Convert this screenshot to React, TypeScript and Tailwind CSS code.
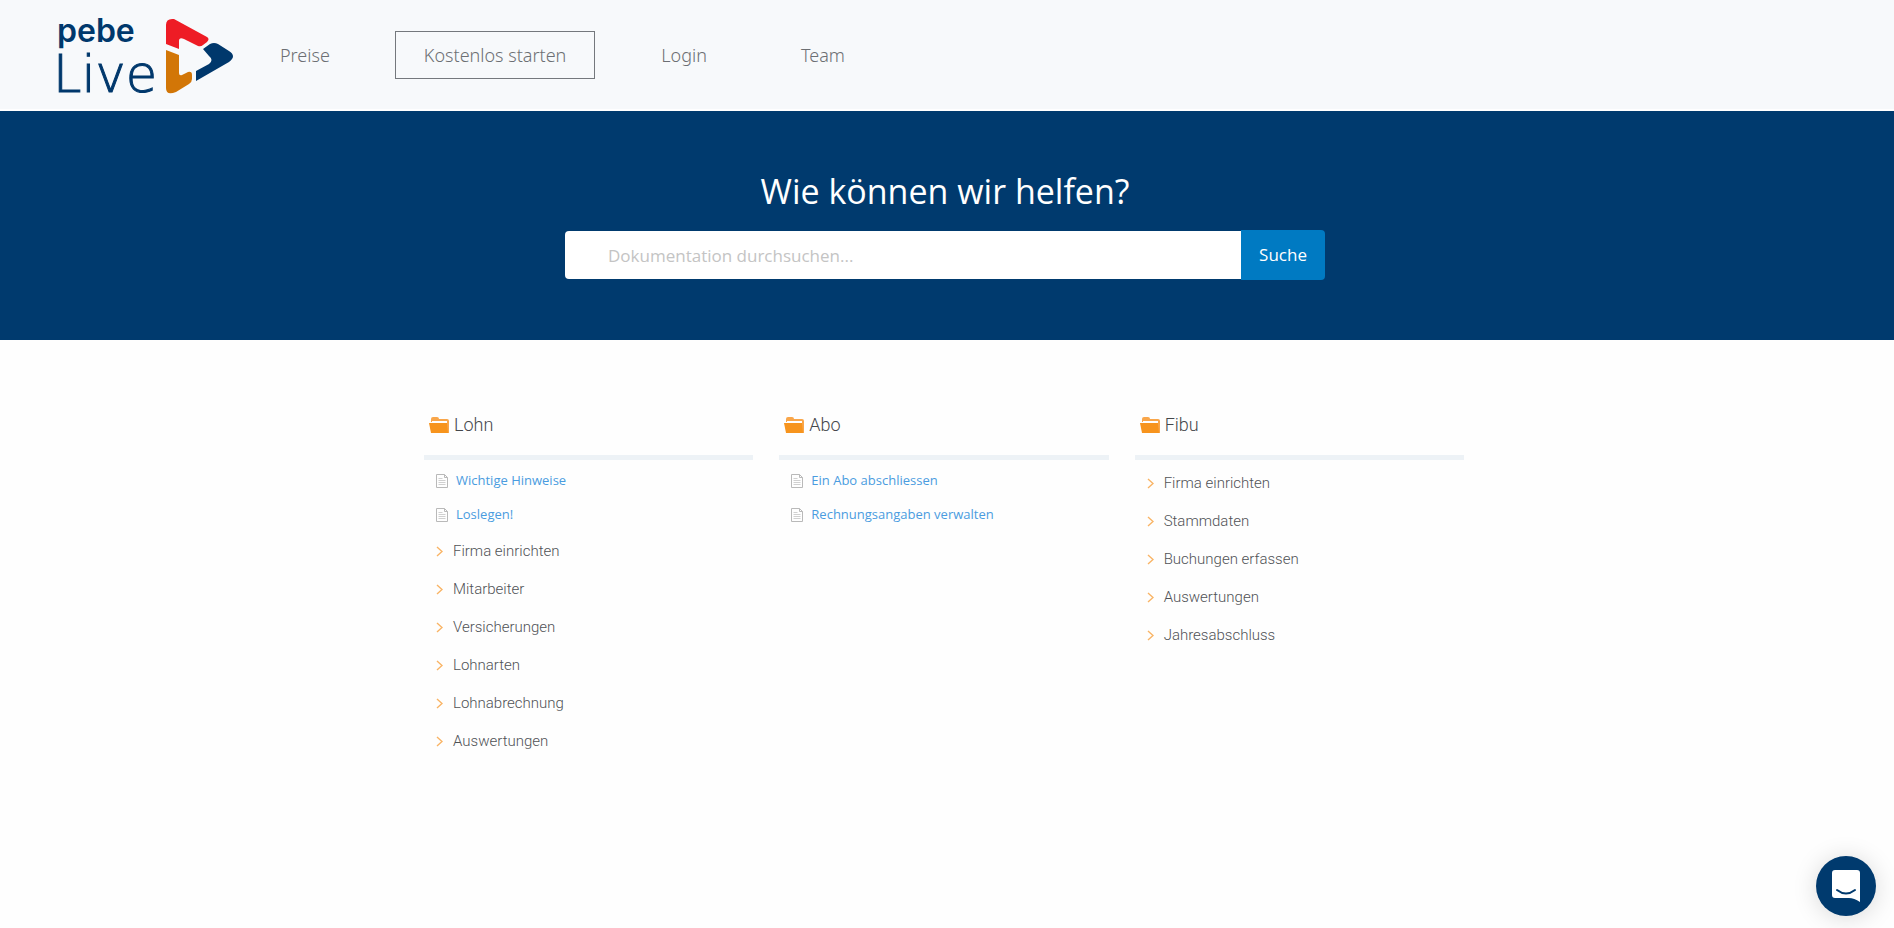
import React from 'react';
import clsx from 'clsx';

interface Category {
  title: string;
  articles: string[];
  sections: string[];
}

const categories: Category[] = [
  {
    title: 'Lohn',
    articles: ['Wichtige Hinweise', 'Loslegen!'],
    sections: [
      'Firma einrichten',
      'Mitarbeiter',
      'Versicherungen',
      'Lohnarten',
      'Lohnabrechnung',
      'Auswertungen',
    ],
  },
  {
    title: 'Abo',
    articles: ['Ein Abo abschliessen', 'Rechnungsangaben verwalten'],
    sections: [],
  },
  {
    title: 'Fibu',
    articles: [],
    sections: [
      'Firma einrichten',
      'Stammdaten',
      'Buchungen erfassen',
      'Auswertungen',
      'Jahresabschluss',
    ],
  },
];

const navItems = [
  { label: 'Preise', className: 'mr-[65px]' },
  { label: 'Kostenlos starten', className: 'flex items-center h-12 px-7 mr-[66px] border border-[#74787d]' },
  { label: 'Login', className: 'mr-[94px]' },
  { label: 'Team', className: '' },
];

const Logo: React.FC = () => (
  <svg width="186" height="108" viewBox="-8 -15 186 108" role="img" aria-label="pebe Live">
    <text fill="#00386c">
      <tspan x="-1" y="26" fontSize="32" fontWeight="600" className="font-['Inter',sans-serif]">pebe</tspan>
      <tspan x="-5" y="76" fontSize="51" fontWeight="200" stroke="#00386c" strokeWidth="1" className="font-['DejaVu_Sans',sans-serif]">Live</tspan>
    </text>
    <path fill="#ee1c25" d="M108 9 Q108 2 116 3 L149 21 Q152 23 149 26 L145 29 Q143 31 140 30 L126 23 Q121 21 121 25 V33 L108 28 Z" />
    <path fill="#d27607" d="M108 34 L121 39 V57 Q121 60 124 59 L130 56 Q134 55 134 59 V63 Q134 66 131 68 L118 76 Q108 80 108 72 Z" />
    <path fill="#00386c" d="M145 33 L152 28 Q156 26 160 28 L171 35 Q179 40 171 46 L138 65 V55 L151 48 Q156 44 151 40 Z" />
  </svg>
);

const FolderIcon: React.FC = () => (
  <svg width="20" height="16" viewBox="0 0 20 16" aria-hidden="true">
    <path fill="#f9a64a" d="M2 5 V2 Q2 0 4 0 H8 Q10 0 10 2 H18 Q20 2 20 4 V16 H18 V4 H3 V5 Z" />
    <path fill="#f7941d" d="M0 6 H18 L19 16 H2 Z" />
  </svg>
);

const DocIcon: React.FC = () => (
  <svg width="12" height="14" viewBox="0 0 12 14" fill="none" aria-hidden="true">
    <path stroke="#b9b9b9" d="M0.5 0.5 H8.5 L11.5 3.5 V13.5 H0.5 Z M8.5 0.5 V3.5 H11.5" />
    <path stroke="#d0d0d0" d="M2.5 4.5 H6.5 M2.5 6.5 H9.5 M2.5 8.5 H9.5 M2.5 10.5 H9.5" />
  </svg>
);

const ChevronIcon: React.FC = () => (
  <svg width="7" height="11" viewBox="0 0 7 11" fill="none" stroke="#f9b465" strokeWidth="1.4" aria-hidden="true">
    <path d="M1 1 L6 5.5 L1 10" />
  </svg>
);

const App: React.FC = () => {
  return (
    <div className="min-h-screen bg-[#fefefe] font-['Open_Sans',sans-serif]">
      <header className="flex items-center h-[111px] pl-[50px] bg-[#f7f9fb] border-b-2 border-white">
        <a href="#" className="mr-[44px]">
          <Logo />
        </a>
        <nav className="flex items-center font-['Noto_Sans',sans-serif] text-lg font-light text-[#6c6f73]">
          {navItems.map((item) => (
            <a key={item.label} href="#" className={clsx('whitespace-nowrap', item.className)}>
              {item.label}
            </a>
          ))}
        </nav>
      </header>

      {/* Suche */}
      <section className="h-[229px] pt-[52px] pr-1 bg-[#003a6e]">
        <h1 className="text-center text-[34px] leading-[56px] text-white">Wie können wir helfen?</h1>
        <form className="flex items-center w-[760px] max-w-full mx-auto mt-[11px]" onSubmit={(e) => e.preventDefault()}>
          <input
            type="text"
            aria-label="Dokumentation durchsuchen"
            placeholder="Dokumentation durchsuchen..."
            className="flex-1 min-w-0 h-12 pl-[43px] bg-white rounded-l text-[17px] outline-none placeholder:text-[#c4c4c4]"
          />
          <button type="submit" className="w-[84px] h-[50px] rounded-r bg-[#007ac2] text-[17px] text-white">
            Suche
          </button>
        </form>
      </section>

      {/* Kategorien */}
      <main className="pt-[59px] pr-[6px]">
        <div className="grid grid-cols-1 md:grid-cols-3 gap-[26px] max-w-[1040px] mx-auto">
          {categories.map((category) => (
            <section key={category.title}>
              <h2 className="flex items-center gap-[5px] h-[52px] pb-1 pl-[5px] box-content border-b-[5px] border-[#edf2f6] font-['Roboto',sans-serif] text-lg font-light text-[#45474b]">
                <FolderIcon />
                {category.title}
              </h2>
              <ul className="pt-1 pl-3">
                {category.articles.map((article) => (
                  <li key={article} className="h-[34px]">
                    <a href="#" className="flex items-center gap-2 h-full text-[13px] text-[#4a9ce0]">
                      <DocIcon />
                      {article}
                    </a>
                  </li>
                ))}
                {category.sections.map((section) => (
                  <li key={section} className="h-[38px]">
                    <a
                      href="#"
                      className="flex items-center gap-[10px] h-full font-['Roboto',sans-serif] text-[15px] font-light text-[#505256]"
                    >
                      <ChevronIcon />
                      {section}
                    </a>
                  </li>
                ))}
              </ul>
            </section>
          ))}
        </div>
      </main>

      <button
        type="button"
        aria-label="Chat öffnen"
        className="fixed right-[18px] bottom-3 flex items-center justify-center w-[60px] h-[60px] rounded-full bg-[#003a6e] shadow-[0_2px_24px_rgba(0,0,0,0.15)]"
      >
        <svg width="28" height="32" viewBox="0 0 28 32" aria-hidden="true">
          <path fill="#fff" d="M3 0 H25 Q28 0 28 3 V32 Q22 28 17 28 H3 Q0 28 0 25 V3 Q0 0 3 0 Z" />
          <path d="M5 20 Q14 27 23 20" fill="none" stroke="#003a6e" strokeWidth="2" strokeLinecap="round" />
        </svg>
      </button>
    </div>
  );
};

export default App;
